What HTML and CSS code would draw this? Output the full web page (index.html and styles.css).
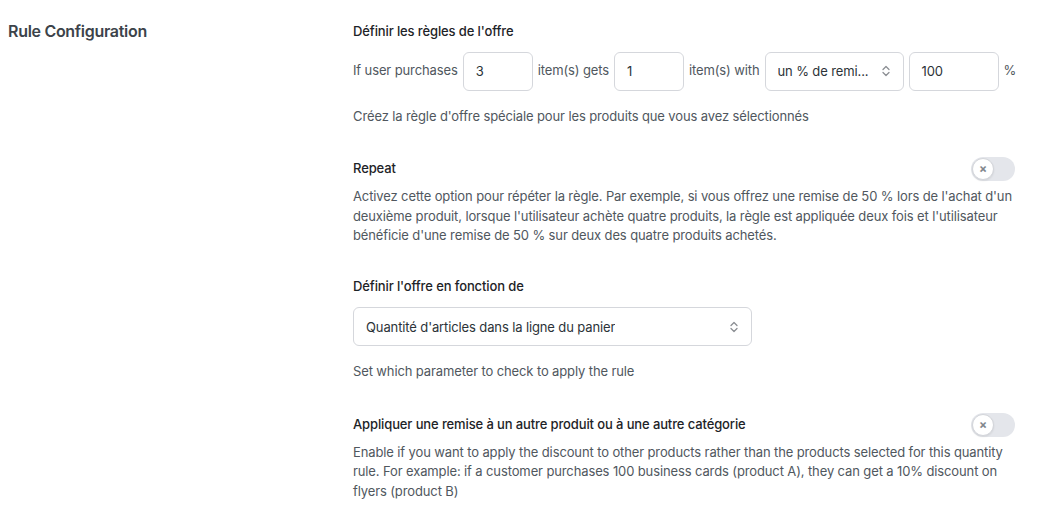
FILE: index.html
```html
<!DOCTYPE html>
<html lang="fr">
<head>
<meta charset="utf-8">
<title>Rule Configuration</title>
<link rel="stylesheet" href="styles.css">
</head>
<body>
<div class="page">
  <div class="side-label">Rule Configuration</div>
  <div class="fields">
    <section class="field">
      <div class="label">Définir les règles de l'offre</div>
      <div class="rule-row">
        <span class="txt">If user purchases</span>
        <div class="input w-sm">3</div>
        <span class="txt">item(s) gets</span>
        <div class="input w-sm">1</div>
        <span class="txt">item(s) with</span>
        <div class="input select w-sel"><span class="val">un % de remi...</span>
          <svg class="chev" width="10" height="14" viewBox="0 0 10 14" fill="none" stroke="#8c8f94" stroke-width="1.3" stroke-linecap="round" stroke-linejoin="round"><path d="M2 5.5L5 2.5L8 5.5"/><path d="M2 8.5L5 11.5L8 8.5"/></svg>
        </div>
        <div class="input w-md">100</div>
        <span class="txt pct">%</span>
      </div>
      <p class="desc gap-desc">Créez la règle d'offre spéciale pour les produits que vous avez sélectionnés</p>
    </section>

    <section class="field">
      <div class="toggle-row">
        <div class="label">Repeat</div>
        <div class="toggle"><span class="knob">×</span></div>
      </div>
      <p class="desc para">Activez cette option pour répéter la règle. Par exemple, si vous offrez une remise de 50 % lors de l'achat d'un deuxième produit, lorsque l'utilisateur achète quatre produits, la règle est appliquée deux fois et l'utilisateur bénéficie d'une remise de 50 % sur deux des quatre produits achetés.</p>
    </section>

    <section class="field">
      <div class="label">Définir l'offre en fonction de</div>
      <div class="input select w-wide"><span class="val">Quantité d'articles dans la ligne du panier</span>
        <svg class="chev" width="10" height="14" viewBox="0 0 10 14" fill="none" stroke="#8c8f94" stroke-width="1.3" stroke-linecap="round" stroke-linejoin="round"><path d="M2 5.5L5 2.5L8 5.5"/><path d="M2 8.5L5 11.5L8 8.5"/></svg>
      </div>
      <p class="desc gap-desc">Set which parameter to check to apply the rule</p>
    </section>

    <section class="field">
      <div class="toggle-row">
        <div class="label">Appliquer une remise à un autre produit ou à une autre catégorie</div>
        <div class="toggle"><span class="knob">×</span></div>
      </div>
      <p class="desc para">Enable if you want to apply the discount to other products rather than the products selected for this quantity rule. For example: if a customer purchases 100 business cards (product A), they can get a 10% discount on flyers (product B)</p>
    </section>
  </div>
</div>
</body>
</html>
```

FILE: styles.css
```css
* { box-sizing: border-box; }
html, body { margin: 0; padding: 0; background: #ffffff; }
body {
  font-family: Inter, "Noto Sans", "Liberation Sans", sans-serif;
  font-size: 13px;
  letter-spacing: -0.12px;
  color: #1d2327;
  -webkit-font-smoothing: antialiased;
}
.page {
  display: grid;
  grid-template-columns: 345px 662px;
  padding: 22px 0 0 8px;
}
.side-label {
  font-size: 16px;
  font-weight: 600;
  letter-spacing: -0.3px;
  color: #3c434a;
  line-height: 20px;
  margin-top: -1px;
}
.fields { display: flex; flex-direction: column; }
.field { margin-bottom: 31px; }
.label {
  font-size: 13px;
  font-weight: 500;
  line-height: 19.5px;
  color: #1d2327;
}
.rule-row {
  display: flex;
  align-items: center;
  gap: 5px;
  margin-top: 10px;
}
.txt { color: #50575e; line-height: 19.5px; white-space: nowrap; flex: none; }
.pct { margin-left: 0; }
.input {
  height: 39px;
  border: 1px solid #d5d7dc;
  border-radius: 6px;
  background: #fff;
  display: flex;
  align-items: center;
  padding: 0 12px;
  font-size: 13px;
  color: #2c3338;
  flex: none;
}
.w-sm { width: 70px; }
.w-sel { width: 139px; }
.w-md { width: 90px; }
.w-wide { width: 399px; margin-top: 11px; }
.select { justify-content: space-between; padding-right: 12px; }
.select .val { white-space: nowrap; overflow: hidden; }
.chev { flex: none; }
.desc {
  margin: 0;
  color: #50575e;
  line-height: 19.5px;
}
.gap-desc { margin-top: 16px; }
.para { margin-top: 6px; }
.toggle-row {
  display: flex;
  justify-content: space-between;
  align-items: center;
  height: 24px;
}
.toggle {
  width: 44px;
  height: 24px;
  border-radius: 12px;
  background: #e4e6eb;
  position: relative;
  flex: none;
}
.knob {
  position: absolute;
  left: 1px;
  top: 1px;
  width: 22px;
  height: 22px;
  border-radius: 50%;
  background: #fff;
  border: 1px solid #d3d5da;
  box-shadow: 0 1px 2px rgba(0,0,0,0.08);
  display: flex;
  align-items: center;
  justify-content: center;
  font-size: 12px;
  font-weight: 700;
  color: #82868c;
  line-height: 1;
}
```
